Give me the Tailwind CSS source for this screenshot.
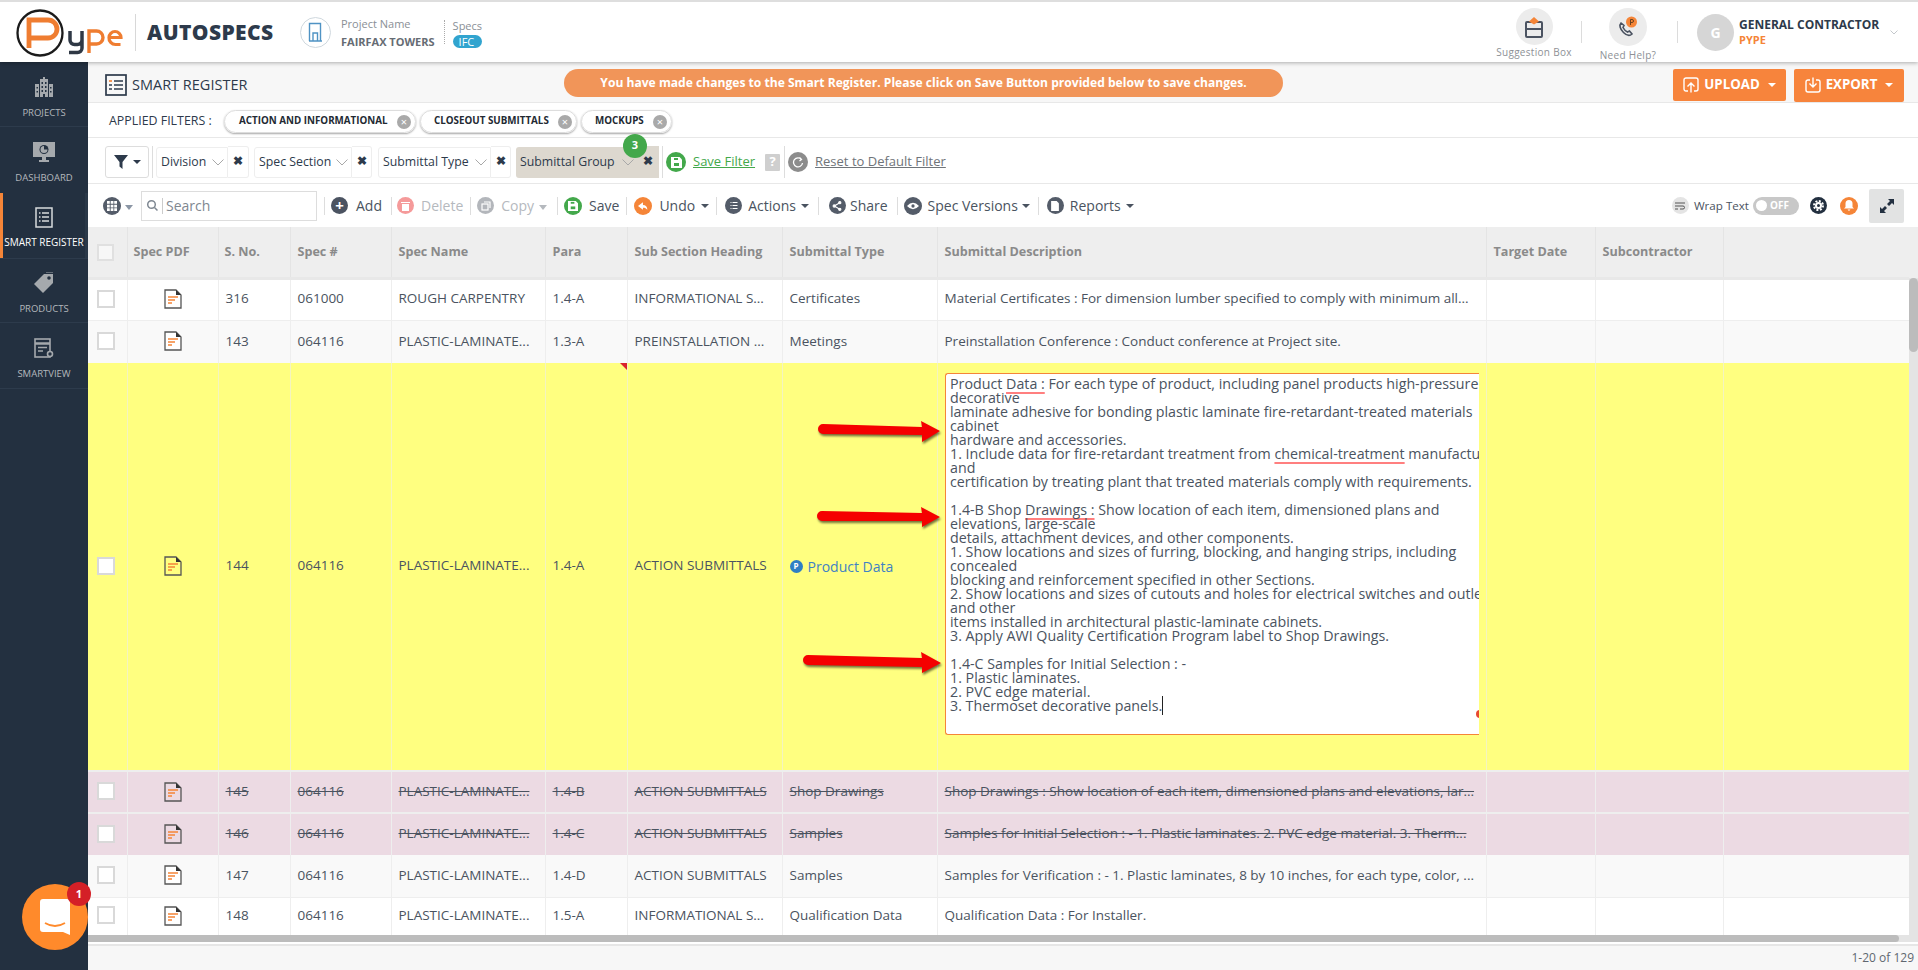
<!DOCTYPE html>
<html lang="en">
<head>
    <meta charset="UTF-8">
    <title>Smart Register</title>
    <script src="https://cdn.jsdelivr.net/npm/@tailwindcss/browser@4"></script>
</head>
<body class="relative h-[970px] w-[1918px] overflow-hidden bg-white font-['Open_Sans',sans-serif] text-[13px] text-[#4a5360]">
    <!-- top header -->
    <header class="relative z-20 flex h-[62px] items-center border-t-2 border-[#dedede] bg-white shadow-[0_1px_4px_rgba(0,0,0,0.3)]">
        <svg class="ml-[14px] mt-[1px]" width="112" height="50" viewBox="0 0 112 50">
            <circle cx="26" cy="25" r="22.500" fill="#fff" stroke="#1b1b1b" stroke-width="2.300"/>
            <path d="M15 40V12h19a8.500 8.500 0 0 1 0 18H15" fill="none" stroke="#ef7d31" stroke-width="4.800"/>
            <path d="M56 23v9a4.500 4.500 0 0 0 4.500 4.500h3a4.500 4.500 0 0 0 4.500-4.500v-9M68 32v8a4.500 4.500 0 0 1-4.500 4.500H55" fill="none" stroke="#2f3845" stroke-width="3.500"/>
            <path d="M75 45V23h7.500a6.500 6.500 0 0 1 0 13H75" fill="none" stroke="#ef7d31" stroke-width="3.400"/>
            <path d="M95 29.500h12a6 6 0 0 0-12 0 6.500 6.500 0 0 0 6.500 7h5" fill="none" stroke="#ef7d31" stroke-width="3.200"/>
        </svg>
        <div class="ml-[9px] h-[37px] border-l border-[#d8d8d8]"></div>
        <div class="ml-[11px] w-[127px] whitespace-nowrap text-[21px] leading-none font-extrabold tracking-[0.4px] text-[#2d3a4b]">AUTOSPECS</div>
        <div class="ml-[26px] flex size-[31px] items-center justify-center rounded-full border border-[#cfd8de]">
            <svg width="15" height="20" viewBox="0 0 15 20" fill="none" stroke="#4f93c4" stroke-width="1.400"><path d="M1.500 19V1.500h11V19M1 19h13M5 19v-8h4.500v8"/></svg>
        </div>
        <div class="ml-[10px] mt-[1px]">
            <div class="text-[11px] leading-[18px] text-[#8a8f96]">Project Name</div>
            <div class="text-[11px] leading-[17px] font-bold text-[#666c74]">FAIRFAX TOWERS</div>
        </div>
        <div class="ml-[9px] h-[24px] border-l border-dotted border-[#aaa]"></div>
        <div class="ml-[8px] mt-[1px]">
            <div class="text-[11px] leading-[17px] text-[#8a8f96]">Specs</div>
            <div class="mt-[1px] rounded-full bg-[#31a4cf] px-[6px] text-[11px] leading-[13px] text-white">IFC</div>
        </div>

        <div class="ml-auto flex items-center">
            <div class="flex w-[76px] flex-col items-center pt-[3px]">
                <div class="flex size-[37px] items-center justify-center rounded-full bg-[#ececec]">
                    <svg width="20" height="22" viewBox="0 0 20 22"><path d="M3 6h14a1 1 0 0 1 1 1v13a1 1 0 0 1-1 1H3a1 1 0 0 1-1-1V7a1 1 0 0 1 1-1z" fill="none" stroke="#4b5361" stroke-width="2"/><path d="M2 13h16" stroke="#4b5361" stroke-width="2"/><path d="M10 1l5 4.500-5 3-5-3z" fill="#f58538"/></svg>
                </div>
                <div class="mt-[1px] whitespace-nowrap text-[10px] leading-[13px] tracking-[0.3px] text-[#8d9196]">Suggestion Box</div>
            </div>
            <div class="ml-[9px] h-[22px] border-l border-[#dcdcdc]"></div>
            <div class="ml-[14px] flex w-[64px] flex-col items-center pt-[6px]">
                <div class="flex size-[38px] items-center justify-center rounded-full bg-[#ececec]">
                    <svg width="24" height="24" viewBox="0 0 24 24"><path d="M5 8c-2 2-1 6 2.500 9.500S14 21 16 19l-2.500-3-2 1c-2-1-3.500-2.500-4.500-4.500l1-2z" fill="none" stroke="#4b5361" stroke-width="1.600"/><circle cx="15.500" cy="7" r="5.500" fill="#f58538"/><path d="M14.500 10V4.500h1.500a1.400 1.400 0 0 1 0 3h-1.500" fill="none" stroke="#6b4320"/></svg>
                </div>
                <div class="mt-[3px] whitespace-nowrap text-[10px] leading-[13px] tracking-[0.3px] text-[#8d9196]">Need Help?</div>
            </div>
            <div class="ml-[17px] h-[22px] border-l border-[#dcdcdc]"></div>
            <div class="ml-[19px] flex size-[37px] items-center justify-center rounded-full bg-[#d6d6d6] text-[14px] font-bold text-white">G</div>
            <div class="ml-[5px] w-[141px]">
                <div class="whitespace-nowrap text-[12px] leading-[16px] font-bold text-[#2d3a4b]">GENERAL CONTRACTOR</div>
                <div class="text-[11px] leading-[14px] font-bold text-[#f58538]">PYPE</div>
            </div>
            <svg class="ml-[10px] mr-[20px]" width="8" height="5" viewBox="0 0 8 5" fill="none" stroke="#c4c8cc"><path d="M.5.5l3.500 3.500L7.500.5"/></svg>
        </div>
    </header>

    <div class="flex h-[908px]">
        <!-- sidebar -->
        <nav class="flex w-[88px] shrink-0 flex-col bg-[#233040] text-center text-[9.5px] text-[#b4b8bd]">
            <a class="flex h-[65px] flex-col items-center border-b border-[#2d3b4c] pt-[15px]">
                <svg width="20" height="20" viewBox="0 0 20 20" fill="#a5a9ad"><path d="M9 0h2v2H9zM6 2h8v18H6zM1 7h4v13H1zM15 7h4v13h-4z"/><path d="M7.500 5H9v2H7.500zM11 5h1.500v2H11zM7.500 9H9v2H7.500zM11 9h1.500v2H11zM7.500 13H9v2H7.500zM11 13h1.500v2H11zM9 17h2v3H9zM2.500 10H4v1.500H2.500zM2.500 14H4v1.500H2.500zM16 10h1.500v1.500H16zM16 14h1.500v1.500H16z" fill="#233040"/></svg>
                <span class="mt-[9px] leading-[13px]">PROJECTS</span>
            </a>
            <a class="flex h-[66px] flex-col items-center pt-[15px]">
                <svg width="22" height="20" viewBox="0 0 22 20" fill="#a5a9ad"><path d="M0 0h22v15H0zM9 15h4v3H9zM6 18h10v2H6z"/><circle cx="11" cy="7.500" r="4.500" fill="#233040"/><path d="M11 7.500V4a3.500 3.500 0 1 0 3.500 3.500z" fill="#a5a9ad"/></svg>
                <span class="mt-[9px] leading-[13px]">DASHBOARD</span>
            </a>
            <a class="flex h-[65px] flex-col items-center border-l-[3px] border-r-[3px] border-l-[#f58538] border-r-[#2a3848] bg-[#233040] pt-[14px] text-white">
                <svg width="18" height="21" viewBox="0 0 18 21" fill="none" stroke="#d8dadc" stroke-width="1.500"><rect x="1" y="1" width="16" height="19"/><path d="M7 6h7M7 10h7M7 14h7M4 6h1.500M4 10h1.500M4 14h1.500"/></svg>
                <span class="mt-[8px] whitespace-nowrap text-[10px] leading-[13px]">SMART REGISTER</span>
            </a>
            <a class="flex h-[65px] flex-col items-center border-y border-[#2d3b4c] pt-[13px]">
                <svg width="20" height="21" viewBox="0 0 20 21" fill="#a5a9ad"><path d="M10 2h9v9L9 21 0 12z"/><path d="M12 0h7" stroke="#a5a9ad"/><circle cx="15" cy="6" r="1.800" fill="#233040"/></svg>
                <span class="mt-[9px] leading-[13px]">PRODUCTS</span>
            </a>
            <a class="flex h-[66px] flex-col items-center border-b border-[#2d3b4c] pt-[15px]">
                <svg width="20" height="20" viewBox="0 0 20 20" fill="none" stroke="#a5a9ad" stroke-width="1.600"><rect x="1" y="1" width="15" height="18"/><path d="M1 5.500h15" stroke-width="2.500"/><path d="M4 9.500h9M4 13h5"/><circle cx="16" cy="16" r="2.500" fill="#233040"/></svg>
                <span class="mt-[9px] leading-[13px]">SMARTVIEW</span>
            </a>
        </nav>

        <main class="flex min-w-0 flex-1 flex-col">
            <!-- title row -->
            <div class="relative flex h-[41px] shrink-0 items-center border-b border-[#e8e8e8] bg-[#f7f7f7] pt-[6px]">
                <svg class="ml-[17px]" width="22" height="22" viewBox="0 0 22 22" fill="none" stroke="#2d3a4b" stroke-width="1.700"><rect x="1" y="1" width="20" height="20"/><path d="M9 7h9M9 11h9M9 15h9"/><path d="M4 7h3" stroke="#f58538"/><path d="M4 11h3M4 15h3"/></svg>
                <span class="ml-[5px] text-[14.500px] text-[#2d3a4b]">SMART REGISTER</span>
                <div class="absolute left-[476px] top-[7px] flex h-[28px] w-[719px] items-center justify-center rounded-full bg-[#f19559] text-[12.100px] font-bold text-white">You have made changes to the Smart Register. Please click on Save Button provided below to save changes.</div>
                <div class="ml-auto flex items-center gap-[8px] pr-[14px]">
                    <div class="flex h-[32px] w-[113px] items-center justify-center rounded-[2px] bg-[#f7843c] text-[13.300px] font-bold text-white">
                        <svg width="16" height="16" viewBox="0 0 16 16" fill="none" stroke="#fff" stroke-width="1.400"><path d="M5 14H3a2 2 0 0 1-2-2V3a2 2 0 0 1 2-2h10a2 2 0 0 1 2 2v9a2 2 0 0 1-2 2h-2M8 15.500V6M4.500 9.500L8 6l3.500 3.500"/></svg>
                        <span class="ml-[5px]">UPLOAD</span>
                        <span class="ml-[8px] border-x-[4px] border-t-[4px] border-x-transparent border-t-white"></span>
                    </div>
                    <div class="flex h-[33px] w-[110px] items-center justify-center rounded-[2px] bg-[#f7843c] text-[13.300px] font-bold text-white">
                        <svg width="16" height="16" viewBox="0 0 16 16" fill="none" stroke="#fff" stroke-width="1.400"><path d="M5 3H3a2 2 0 0 0-2 2v8a2 2 0 0 0 2 2h10a2 2 0 0 0 2-2V5a2 2 0 0 0-2-2h-2M8 .5V10M4.500 6.500L8 10l3.500-3.500"/></svg>
                        <span class="ml-[5px]">EXPORT</span>
                        <span class="ml-[8px] border-x-[4px] border-t-[4px] border-x-transparent border-t-white"></span>
                    </div>
                </div>
            </div>

            <!-- applied filters -->
            <div class="flex h-[35px] shrink-0 items-center border-b border-[#e8e8e8] pl-[21px] pt-[3px]">
                <span class="w-[107px] whitespace-nowrap text-[12.400px] text-[#2d3a4b]">APPLIED FILTERS :</span>
                <div class="ml-[8px] flex items-center gap-[4px]">
                    <div class="flex h-[23px] w-[192px] items-center justify-between rounded-full border border-[#ddd] pl-[14px] pr-[4px] shadow-[0_1px_2px_rgba(0,0,0,0.35)]">
                        <span class="text-[9.800px] font-bold whitespace-nowrap text-[#232a33]">ACTION AND INFORMATIONAL</span>
                        <span class="flex size-[14px] items-center justify-center rounded-full bg-[#a9a9a9] text-[11px] leading-none text-white">×</span>
                    </div>
                    <div class="flex h-[23px] w-[157px] items-center justify-between rounded-full border border-[#ddd] pl-[13px] pr-[4px] shadow-[0_1px_2px_rgba(0,0,0,0.35)]">
                        <span class="text-[9.800px] font-bold whitespace-nowrap text-[#232a33]">CLOSEOUT SUBMITTALS</span>
                        <span class="flex size-[14px] items-center justify-center rounded-full bg-[#a9a9a9] text-[11px] leading-none text-white">×</span>
                    </div>
                    <div class="flex h-[23px] w-[91px] items-center justify-between rounded-full border border-[#ddd] pl-[13px] pr-[4px] shadow-[0_1px_2px_rgba(0,0,0,0.35)]">
                        <span class="text-[9.800px] font-bold whitespace-nowrap text-[#232a33]">MOCKUPS</span>
                        <span class="flex size-[14px] items-center justify-center rounded-full bg-[#a9a9a9] text-[11px] leading-none text-white">×</span>
                    </div>
                </div>
            </div>

            <!-- filter selects -->
            <div class="relative z-10 flex h-[46px] shrink-0 items-center border-b border-[#e8e8e8] pl-[17px] pt-[3px] text-[12.300px] text-[#2d3a4b]">
                <div class="flex h-[32px] w-[44px] items-center justify-center gap-[5px] rounded-[3px] border border-[#ddd]">
                    <svg width="14" height="14" viewBox="0 0 14 14" fill="#2d3a4b"><path d="M0 0h14L8.500 7v7l-3-2.500V7z"/></svg>
                    <span class="border-x-[4px] border-t-[4px] border-x-transparent border-t-[#2d3a4b]"></span>
                </div>
                <div class="ml-[3px] h-[32px] border-l border-[#ddd]"></div>
                <div class="ml-[3px] flex h-[31px] w-[72px] items-center justify-between rounded-l-[3px] border border-[#eee] pl-[4px] pr-[3px]">
                    <span>Division</span>
                    <svg width="12" height="7" viewBox="0 0 12 7" fill="none" stroke="#a8a8a8"><path d="M.5.5L6 6l5.500-5.500"/></svg>
                </div>
                <div class="flex h-[32px] w-[21px] items-center justify-center rounded-r-[3px] border border-l-0 border-[#eee] pb-[3px] text-[12px] font-bold">✖</div>
                <div class="ml-[5px] flex h-[31px] w-[98px] items-center justify-between rounded-l-[3px] border border-[#eee] pl-[4px] pr-[3px]">
                    <span class="whitespace-nowrap">Spec Section</span>
                    <svg width="12" height="7" viewBox="0 0 12 7" fill="none" stroke="#a8a8a8"><path d="M.5.5L6 6l5.500-5.500"/></svg>
                </div>
                <div class="flex h-[32px] w-[20px] items-center justify-center rounded-r-[3px] border border-l-0 border-[#eee] pb-[3px] text-[12px] font-bold">✖</div>
                <div class="ml-[6px] flex h-[31px] w-[113px] items-center justify-between rounded-l-[3px] border border-[#eee] pl-[4px] pr-[3px]">
                    <span class="whitespace-nowrap">Submittal Type</span>
                    <svg width="12" height="7" viewBox="0 0 12 7" fill="none" stroke="#a8a8a8"><path d="M.5.5L6 6l5.500-5.500"/></svg>
                </div>
                <div class="flex h-[32px] w-[20px] items-center justify-center rounded-r-[3px] border border-l-0 border-[#eee] pb-[3px] text-[12px] font-bold">✖</div>
                <div class="relative ml-[5px] flex h-[31px] w-[121px] items-center justify-between rounded-l-[3px] bg-[#ddd8cf] pl-[4px] pr-[3px]">
                    <span class="whitespace-nowrap">Submittal Group</span>
                    <svg width="12" height="7" viewBox="0 0 12 7" fill="none" stroke="#a8a8a8"><path d="M.5.5L6 6l5.500-5.500"/></svg>
                    <span class="absolute -top-[13px] right-[-10px] z-10 flex size-[24px] items-center justify-center rounded-full bg-[#43a84b] text-[11px] font-bold text-white">3</span>
                </div>
                <div class="flex h-[32px] w-[22px] items-center justify-center bg-[#ddd8cf] pb-[3px] text-[12px] font-bold">✖</div>
                <div class="ml-[3px] h-[32px] border-l border-[#ddd]"></div>
                <span class="ml-[3px] flex size-[20px] items-center justify-center rounded-full bg-[#43a84b]">
                    <svg width="11" height="11" viewBox="0 0 11 11" fill="#fff"><path d="M0 0h8.500L11 2.500V11H0z"/><rect x="3" y="6" width="5" height="3" fill="#43a84b"/><rect x="3" y="1" width="4" height="2" fill="#43a84b"/></svg>
                </span>
                <span class="ml-[7px] text-[13px] text-[#43a84b] underline">Save Filter</span>
                <span class="relative ml-[10px] flex h-[17px] w-[15px] items-center justify-center rounded-[1px] bg-[#cfcfcf] text-[13px] font-bold text-white">?</span>
                <div class="ml-[4px] h-[32px] border-l border-[#ddd]"></div>
                <span class="ml-[3px] flex size-[20px] items-center justify-center rounded-full bg-[#8c8c8c]">
                    <svg width="12" height="12" viewBox="0 0 12 12" fill="none" stroke="#fff" stroke-width="1.300"><path d="M9.500 3.500A4.500 4.500 0 1 0 10.500 7M7.500 1.500l2 2-2 1.500"/></svg>
                </span>
                <span class="ml-[7px] text-[13px] text-[#6f7479] underline">Reset to Default Filter</span>
            </div>

            <!-- toolbar -->
            <div class="flex h-[43px] shrink-0 items-center pl-[15px] text-[14px] text-[#4a5360]">
                <span class="flex size-[18px] items-center justify-center rounded-full bg-[#545c69]">
                    <svg width="10" height="10" viewBox="0 0 9 9" fill="#fff"><path d="M0 0h2.500v2.500H0zM3.300 0h2.500v2.500H3.300zM6.500 0H9v2.500H6.500zM0 3.300h2.500v2.500H0zM3.300 3.300h2.500v2.500H3.300zM6.500 3.300H9v2.500H6.500zM0 6.500h2.500V9H0zM3.300 6.500h2.500V9H3.300zM6.500 6.500H9V9H6.500z"/></svg>
                </span>
                <span class="ml-[4px] mt-[3px] border-x-[4.500px] border-t-[5px] border-x-transparent border-t-[#8b96a5]"></span>
                <div class="ml-[8px] flex h-[30px] w-[176px] items-center border border-[#ddd] pl-[4px]">
                    <svg width="13" height="13" viewBox="0 0 13 13" fill="none" stroke="#7f8892" stroke-width="1.500"><circle cx="5.500" cy="5.500" r="3.800"/><path d="M8.500 8.500l3 3"/></svg>
                    <span class="ml-[3px] border-l border-[#ccc] pl-[3px] text-[14px] leading-[16px] text-[#808790]">Search</span>
                </div>
                <div class="ml-[7px] h-[18px] border-l border-[#ddd]"></div>
                <span class="ml-[6px] flex size-[17px] items-center justify-center rounded-full bg-[#4b5361] text-[15px] leading-none font-bold text-white">+</span>
                <span class="ml-[8px]">Add</span>
                <div class="ml-[9px] h-[18px] border-l border-[#ddd]"></div>
                <span class="ml-[5px] flex size-[17px] items-center justify-center rounded-full bg-[#f59a9a]">
                    <svg width="9" height="10" viewBox="0 0 9 10" fill="#fff"><path d="M0 1h9v1H0zM1 3h7v7H1z"/></svg>
                </span>
                <span class="ml-[7px] text-[#b5b9be]">Delete</span>
                <div class="ml-[7px] h-[18px] border-l border-[#ddd]"></div>
                <span class="ml-[6px] flex size-[17px] items-center justify-center rounded-full bg-[#b3b6bb]">
                    <svg width="10" height="10" viewBox="0 0 10 10" fill="none" stroke="#fff" stroke-width="1.200"><rect x="1" y="3" width="6" height="6"/><path d="M3 1h6v6"/></svg>
                </span>
                <span class="ml-[7px] text-[#b5b9be]">Copy</span>
                <span class="ml-[5px] mt-[3px] border-x-[4.500px] border-t-[5px] border-x-transparent border-t-[#b5b9be]"></span>
                <div class="ml-[10px] h-[18px] border-l border-[#ddd]"></div>
                <span class="ml-[6px] flex size-[18px] items-center justify-center rounded-full bg-[#43a84b]">
                    <svg width="10" height="10" viewBox="0 0 11 11" fill="#fff"><path d="M0 0h8.500L11 2.500V11H0z"/><rect x="3" y="6" width="5" height="3" fill="#43a84b"/><rect x="3" y="1" width="4" height="2" fill="#43a84b"/></svg>
                </span>
                <span class="ml-[7px]">Save</span>
                <div class="ml-[7px] h-[18px] border-l border-[#ddd]"></div>
                <span class="ml-[7px] flex size-[18px] items-center justify-center rounded-full bg-[#f58538]">
                    <svg width="11" height="10" viewBox="0 0 10 9" fill="#fff"><path d="M4.500 1L0 4.500 4.500 8V6c2 0 3 .5 4 2 0-3-1.500-4.500-4-4.500z"/></svg>
                </span>
                <span class="ml-[7px]">Undo</span>
                <span class="ml-[6px] border-x-[4px] border-t-[4px] border-x-transparent border-t-[#4a5360]"></span>
                <div class="ml-[7px] h-[18px] border-l border-[#ddd]"></div>
                <span class="ml-[8px] flex size-[17px] items-center justify-center rounded-full bg-[#545c69]">
                    <svg width="10" height="9" viewBox="0 0 9 9" fill="#fff"><path d="M1 1h1v1H1zM3 1h5v1H3zM1 4h1v1H1zM3 4h5v1H3zM1 7h1v1H1zM3 7h5v1H3z"/></svg>
                </span>
                <span class="ml-[6px]">Actions</span>
                <span class="ml-[5px] border-x-[4px] border-t-[4px] border-x-transparent border-t-[#4a5360]"></span>
                <div class="ml-[9px] h-[18px] border-l border-[#ddd]"></div>
                <span class="ml-[10px] flex size-[17px] items-center justify-center rounded-full bg-[#545c69]">
                    <svg width="10" height="10" viewBox="0 0 9 9" fill="none" stroke="#fff"><path d="M2 4.500L7 1.500M2 4.500L7 7.500"/><circle cx="2" cy="4.500" r="1" fill="#fff"/><circle cx="7" cy="1.500" r="1" fill="#fff"/><circle cx="7" cy="7.500" r="1" fill="#fff"/></svg>
                </span>
                <span class="ml-[4px]">Share</span>
                <div class="ml-[9px] h-[18px] border-l border-[#ddd]"></div>
                <span class="ml-[6px] flex size-[18px] items-center justify-center rounded-full bg-[#545c69]">
                    <svg width="12" height="8" viewBox="0 0 11 7"><path d="M0 3.500Q5.500-2.500 11 3.500 5.500 9.500 0 3.500z" fill="#fff"/><circle cx="5.500" cy="3.500" r="1.500" fill="#545c69"/></svg>
                </span>
                <span class="ml-[6px]">Spec Versions</span>
                <span class="ml-[4px] border-x-[4px] border-t-[4px] border-x-transparent border-t-[#4a5360]"></span>
                <div class="ml-[8px] h-[18px] border-l border-[#ddd]"></div>
                <span class="ml-[8px] flex size-[17px] items-center justify-center rounded-full bg-[#545c69]">
                    <svg width="8" height="10" viewBox="0 0 7 9" fill="#fff"><path d="M0 0h5l2 2v7H0z"/></svg>
                </span>
                <span class="ml-[6px]">Reports</span>
                <span class="ml-[5px] border-x-[4px] border-t-[4px] border-x-transparent border-t-[#4a5360]"></span>

                <div class="ml-auto flex items-center pr-[14px]">
                    <span class="flex size-[17px] items-center justify-center rounded-full bg-[#e4e4e4]">
                        <svg width="10" height="8" viewBox="0 0 10 8" fill="none" stroke="#555"><path d="M0 1h10M0 4h8a1.500 1.500 0 0 1 0 3H5M0 7h3"/></svg>
                    </span>
                    <span class="ml-[5px] text-[11.600px] text-[#4a5360]">Wrap Text</span>
                    <div class="ml-[4px] flex h-[18px] w-[46px] items-center rounded-full bg-[#c8c8c8] pl-[3px]">
                        <span class="size-[11px] rounded-full bg-white"></span>
                        <span class="ml-[3px] text-[10px] font-bold text-white">OFF</span>
                    </div>
                    <span class="ml-[11px] flex size-[17px] items-center justify-center rounded-full bg-[#233040]">
                        <svg width="11" height="11" viewBox="0 0 11 11"><circle cx="5.500" cy="5.500" r="4.500" fill="none" stroke="#fff" stroke-width="2" stroke-dasharray="2 1.500"/><circle cx="5.500" cy="5.500" r="3.500" fill="#fff"/><circle cx="5.500" cy="5.500" r="1.500" fill="#233040"/></svg>
                    </span>
                    <span class="ml-[13px] flex size-[18px] items-center justify-center rounded-full bg-[#f58538]">
                        <svg width="10" height="11" viewBox="0 0 10 11" fill="#fff"><path d="M5 0a3.500 3.500 0 0 1 3.500 3.500V7L10 8.500H0L1.500 7V3.500A3.500 3.500 0 0 1 5 0zM3.500 9.500h3L5 11z"/></svg>
                    </span>
                    <span class="ml-[11px] flex h-[34px] w-[35px] items-center justify-center rounded-[2px] bg-[#e2e3e3]">
                        <svg width="16" height="16" viewBox="0 0 16 16" fill="#233040"><path d="M9 1h6v6l-2-2-3 3-2-2 3-3zM1 15V9l2 2 3-3 2 2-3 3 2 2z"/></svg>
                    </span>
                </div>
            </div>

            <!-- table -->
            <div class="relative min-h-0 flex-1 overflow-hidden">
                <table class="w-[1821px] table-fixed border-collapse text-[13.500px] text-[#4a5360]">
                    <colgroup>
                        <col class="w-[39px]"><col class="w-[91px]"><col class="w-[72px]"><col class="w-[101px]"><col class="w-[154px]"><col class="w-[82px]"><col class="w-[155px]"><col class="w-[155px]"><col class="w-[549px]"><col class="w-[109px]"><col class="w-[128px]"><col class="w-[186px]">
                    </colgroup>
                    <thead>
                        <tr class="h-[51px] border-b-[3px] border-[#e8e8e8] bg-[#eeeeee] text-left text-[12.600px] font-bold text-[#8a8a8a] [&_th]:pt-[2px]">
                            <th class="border-r border-[#e4e4e4] pl-[9px]"><span class="block size-[17px] border-2 border-[#e0e0e0] bg-[#f7f7f7]"></span></th>
                            <th class="border-r border-[#e4e4e4] pl-[6px]">Spec PDF</th>
                            <th class="border-r border-[#e4e4e4] pl-[6px]">S. No.</th>
                            <th class="border-r border-[#e4e4e4] pl-[7px]">Spec #</th>
                            <th class="border-r border-[#e4e4e4] pl-[7px]">Spec Name</th>
                            <th class="border-r border-[#e4e4e4] pl-[7px]">Para</th>
                            <th class="border-r border-[#e4e4e4] pl-[7px]">Sub Section Heading</th>
                            <th class="border-r border-[#e4e4e4] pl-[7px]">Submittal Type</th>
                            <th class="border-r border-[#e4e4e4] pl-[7px]">Submittal Description</th>
                            <th class="border-r border-[#e4e4e4] pl-[7px]">Target Date</th>
                            <th class="border-r border-[#e4e4e4] pl-[7px]">Subcontractor</th>
                            <th></th>
                        </tr>
                    </thead>
                    <tbody class="[&_td]:truncate [&_td]:border-r [&_td]:border-[#eeeeee] [&_td]:pb-[2px] [&_td]:pl-[7px]">
                        <tr class="h-[42px] border-b border-[#eeeeee] bg-white">
                            <td class="pl-[9px]!"><span class="block size-[18px] border-2 border-[#d9d9d9] bg-white"></span></td>
                            <td class="pl-0! text-center"><svg class="inline" width="18" height="20" viewBox="0 0 18 20"><path d="M1 1h11l5 5v13H1z" fill="#fff" stroke="#555" stroke-width="1.300"/><path d="M12 1l5 5h-5z" fill="#333"/><path d="M4 8h10M4 11h7M4 14h4" stroke="#f58538" stroke-width="1.700"/></svg></td>
                            <td>316</td><td>061000</td><td>ROUGH CARPENTRY</td><td>1.4-A</td><td>INFORMATIONAL S...</td><td>Certificates</td>
                            <td>Material Certificates : For dimension lumber specified to comply with minimum all...</td><td></td><td></td><td></td>
                        </tr>
                        <tr class="h-[43px] bg-[#f9f9f9]">
                            <td class="pl-[9px]!"><span class="block size-[18px] border-2 border-[#d9d9d9] bg-white"></span></td>
                            <td class="pl-0! text-center"><svg class="inline" width="18" height="20" viewBox="0 0 18 20"><path d="M1 1h11l5 5v13H1z" fill="#fff" stroke="#555" stroke-width="1.300"/><path d="M12 1l5 5h-5z" fill="#333"/><path d="M4 8h10M4 11h7M4 14h4" stroke="#f58538" stroke-width="1.700"/></svg></td>
                            <td>143</td><td>064116</td><td>PLASTIC-LAMINATE...</td><td>1.3-A</td><td>PREINSTALLATION ...</td><td>Meetings</td>
                            <td>Preinstallation Conference : Conduct conference at Project site.</td><td></td><td></td><td></td>
                        </tr>
                        <tr class="h-[408px] border-b-2 border-[#eeeeee] bg-[#ffff80] [&_td]:border-[#f4f4c0]">
                            <td class="pl-[9px]!"><span class="block size-[18px] border-2 border-[#d9d9d9] bg-white"></span></td>
                            <td class="pl-0! text-center"><svg class="inline" width="18" height="20" viewBox="0 0 18 20"><path d="M1 1h11l5 5v13H1z" fill="#ffff80" stroke="#555" stroke-width="1.300"/><path d="M12 1l5 5h-5z" fill="#333"/><path d="M4 8h10M4 11h7M4 14h4" stroke="#f58538" stroke-width="1.700"/></svg></td>
                            <td>144</td><td>064116</td><td>PLASTIC-LAMINATE...</td><td class="relative">1.4-A<span class="absolute right-0 top-0 border-t-[7px] border-l-[7px] border-t-[#d9232e] border-l-transparent"></span></td><td>ACTION SUBMITTALS</td>
                            <td><span class="inline-flex items-center text-[14px] text-[#3f82c4]"><span class="mr-[5px] flex size-[13px] items-center justify-center rounded-full bg-[#2f7fc4] text-[8px] font-bold text-white">P</span>Product Data</span></td>
                            <td></td><td></td><td></td><td></td>
                        </tr>
                        <tr class="h-[42px] border-b-2 border-[#eeeeee] bg-[#ecdae3] line-through">
                            <td class="pl-[9px]!"><span class="block size-[18px] border-2 border-[#d9d9d9] bg-white"></span></td>
                            <td class="pl-0! text-center"><svg class="inline" width="18" height="20" viewBox="0 0 18 20"><path d="M1 1h11l5 5v13H1z" fill="#ecdae3" stroke="#555" stroke-width="1.300"/><path d="M12 1l5 5h-5z" fill="#333"/><path d="M4 8h10M4 11h7M4 14h4" stroke="#f58538" stroke-width="1.700"/></svg></td>
                            <td>145</td><td>064116</td><td>PLASTIC-LAMINATE...</td><td>1.4-B</td><td>ACTION SUBMITTALS</td><td>Shop Drawings</td>
                            <td>Shop Drawings : Show location of each item, dimensioned plans and elevations, lar...</td><td></td><td></td><td></td>
                        </tr>
                        <tr class="h-[42px] bg-[#ecdae3] line-through">
                            <td class="pl-[9px]!"><span class="block size-[18px] border-2 border-[#d9d9d9] bg-white"></span></td>
                            <td class="pl-0! text-center"><svg class="inline" width="18" height="20" viewBox="0 0 18 20"><path d="M1 1h11l5 5v13H1z" fill="#ecdae3" stroke="#555" stroke-width="1.300"/><path d="M12 1l5 5h-5z" fill="#333"/><path d="M4 8h10M4 11h7M4 14h4" stroke="#f58538" stroke-width="1.700"/></svg></td>
                            <td>146</td><td>064116</td><td>PLASTIC-LAMINATE...</td><td>1.4-C</td><td>ACTION SUBMITTALS</td><td>Samples</td>
                            <td>Samples for Initial Selection : - 1. Plastic laminates. 2. PVC edge material. 3. Therm...</td><td></td><td></td><td></td>
                        </tr>
                        <tr class="h-[42px] border-b border-[#eeeeee] bg-[#f9f9f9]">
                            <td class="pl-[9px]!"><span class="block size-[18px] border-2 border-[#d9d9d9] bg-white"></span></td>
                            <td class="pl-0! text-center"><svg class="inline" width="18" height="20" viewBox="0 0 18 20"><path d="M1 1h11l5 5v13H1z" fill="#fff" stroke="#555" stroke-width="1.300"/><path d="M12 1l5 5h-5z" fill="#333"/><path d="M4 8h10M4 11h7M4 14h4" stroke="#f58538" stroke-width="1.700"/></svg></td>
                            <td>147</td><td>064116</td><td>PLASTIC-LAMINATE...</td><td>1.4-D</td><td>ACTION SUBMITTALS</td><td>Samples</td>
                            <td>Samples for Verification : - 1. Plastic laminates, 8 by 10 inches, for each type, color, ...</td><td></td><td></td><td></td>
                        </tr>
                        <tr class="h-[38px] bg-white">
                            <td class="pl-[9px]!"><span class="block size-[18px] border-2 border-[#d9d9d9] bg-white"></span></td>
                            <td class="pl-0! text-center"><svg class="inline" width="18" height="20" viewBox="0 0 18 20"><path d="M1 1h11l5 5v13H1z" fill="#fff" stroke="#555" stroke-width="1.300"/><path d="M12 1l5 5h-5z" fill="#333"/><path d="M4 8h10M4 11h7M4 14h4" stroke="#f58538" stroke-width="1.700"/></svg></td>
                            <td>148</td><td>064116</td><td>PLASTIC-LAMINATE...</td><td>1.5-A</td><td>INFORMATIONAL S...</td><td>Qualification Data</td>
                            <td>Qualification Data : For Installer.</td><td></td><td></td><td></td>
                        </tr>
                    </tbody>
                </table>

                <!-- open editor over the description cell -->
                <div class="absolute left-[857px] top-[146px] h-[362px] w-[534px] overflow-hidden rounded-l-[3px] border border-r-0 border-[#f58538] bg-white pl-[4px] pt-[3px] text-[14.250px] leading-[14px] whitespace-pre text-[#4a5360]">Product <span class="underline decoration-[#ff7f7f] decoration-2 underline-offset-[3px]">Data :</span> For each type of product, including panel products high-pressure
decorative
laminate adhesive for bonding plastic laminate fire-retardant-treated materials
cabinet
hardware and accessories.
1. Include data for fire-retardant treatment from <span class="underline decoration-[#ff7f7f] decoration-2 underline-offset-[3px]">chemical-treatment</span> manufacturer
and
certification by treating plant that treated materials comply with requirements.

1.4-B Shop <span class="underline decoration-[#ff7f7f] decoration-2 underline-offset-[3px]">Drawings :</span> Show location of each item, dimensioned plans and
elevations, large-scale
details, attachment devices, and other components.
1. Show locations and sizes of furring, blocking, and hanging strips, including
concealed
blocking and reinforcement specified in other Sections.
2. Show locations and sizes of cutouts and holes for electrical switches and outlets
and other
items installed in architectural plastic-laminate cabinets.
3. Apply AWI Quality Certification Program label to Shop Drawings.

1.4-C Samples for Initial Selection : -
1. Plastic laminates.
2. PVC edge material.
3. Thermoset decorative panels.<span class="border-r border-[#222]"></span><span class="absolute right-[-5px] bottom-[16px] size-[8px] rounded-full bg-[#e8492f]"></span></div>

                <!-- annotation arrows -->
                <svg class="pointer-events-none absolute left-[-88px] top-[-227px] drop-shadow-[1px_2px_1px_rgba(0,0,0,0.55)]" width="1918" height="970" viewBox="0 0 1918 970">
                    <g fill="#f50000">
                        <path d="M823 424L922 427L921 421L940 431L922 442L922 435L823 434a5 5 0 0 1 0-10z"/>
                        <path d="M822 511L922 513L921 507L940 517L922 527L922 521L822 521a5 5 0 0 1 0-10z"/>
                        <path d="M808 655L922 658L921 652L941 663L922 673L922 667L808 665a5 5 0 0 1 0-10z"/>
                    </g>
                </svg>

                <!-- scrollbars -->
                <div class="absolute right-0 top-0 h-[51px] w-[9px] bg-[#eeeeee]"></div>
                <div class="absolute bottom-[28px] left-0 right-[9px] h-[7px] bg-[#e4e4e4]"><div class="h-full w-[1811px] rounded-r-full bg-[#bcbcbc]"></div></div>
                <div class="absolute right-0 top-[51px] bottom-[28px] w-[9px] bg-[#e4e4e4]"><div class="h-[74px] w-full rounded-full bg-[#bcbcbc]"></div></div>
                <div class="absolute inset-x-0 bottom-0 flex h-[26px] items-center justify-end border-t-2 border-[#e6e6e6] bg-[#f7f7f7] pr-[4px] text-[12px] text-[#5f6770]">1-20 of 129</div>
            </div>
        </main>
    </div>

    <!-- chat launcher -->
    <div class="absolute left-[22px] top-[884px] z-30 flex h-[66px] w-[66px] items-center justify-center rounded-full bg-[#ff8a2b]">
        <svg width="30" height="36" viewBox="0 0 30 36"><path d="M3 0h24a3 3 0 0 1 3 3v33l-7-3H3a3 3 0 0 1-3-3V3a3 3 0 0 1 3-3z" fill="#fff"/><path d="M5 24q10 6 20 0" fill="none" stroke="#ff8a2b" stroke-width="1.800"/></svg>
        <span class="absolute left-[45px] top-[-2px] flex size-[24px] items-center justify-center rounded-full bg-[#d42027] text-[11px] font-bold text-white">1</span>
    </div>
</body>
</html>
